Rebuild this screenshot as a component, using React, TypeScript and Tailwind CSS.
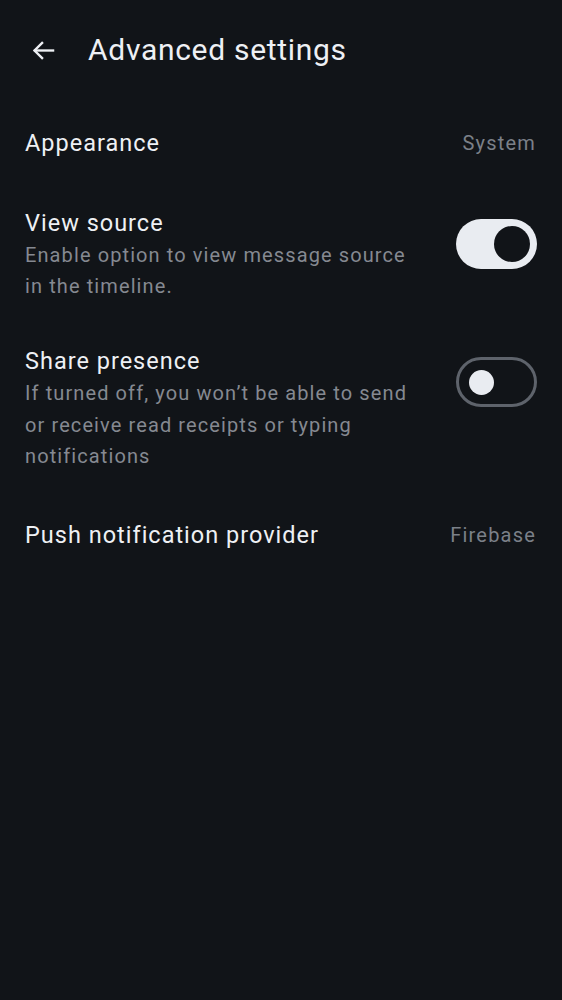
import React from "react";

function Toggle({ on }: { on: boolean }) {
  if (on) {
    return (
      <div className="-mr-[1px] mt-[12px] flex h-[50px] w-[81px] shrink-0 items-center justify-end rounded-full bg-[#e9ecf1] pr-[7px]">
        <div className="h-[36px] w-[36px] rounded-full bg-[#111418]" />
      </div>
    );
  }
  return (
    <div className="-mr-[1px] mt-[12px] flex h-[50px] w-[81px] shrink-0 items-center rounded-full border-[3px] border-[#5e636b] pl-[10px]">
      <div className="h-[25px] w-[25px] rounded-full bg-[#e9ecf1]" />
    </div>
  );
}

export default function App() {
  return (
    <div
      className="min-h-[1000px] w-full bg-[#111418] text-[#eef0f4]"
      style={{ fontFamily: "Roboto, 'Noto Sans', sans-serif" }}
    >
      <div className="flex h-[100px] items-center pl-[30px]">
        <svg width="27" height="27" viewBox="0 0 24 24" fill="none" stroke="#eef0f4" strokeWidth="2.1" strokeLinecap="square">
          <path d="M20.5 12H4.5" />
          <path d="M11.5 4.5L4 12l7.5 7.5" strokeLinecap="butt" strokeLinejoin="miter" />
        </svg>
        <div className="ml-[31px] text-[30px] font-normal leading-none tracking-[0.7px]">Advanced settings</div>
      </div>

      <div className="pl-[25px] pr-[26px]">
        <div className="mt-[27px] flex items-center justify-between">
          <div className="text-[23.5px] leading-[33px] tracking-[1px]">Appearance</div>
          <div className="text-[20px] leading-[33px] tracking-[1.2px] text-[#7b8088]">System</div>
        </div>

        <div className="mt-[47px] flex items-start gap-[30px]">
          <div className="flex-1">
            <div className="text-[23.5px] leading-[33px] tracking-[1px]">View source</div>
            <div className="text-[20px] leading-[31px] tracking-[1.1px] text-[#858991]">
              Enable option to view message source in the timeline.
            </div>
          </div>
          <Toggle on={true} />
        </div>

        <div className="mt-[43px] flex items-start gap-[30px]">
          <div className="flex-1">
            <div className="text-[23.5px] leading-[33px] tracking-[1px]">Share presence</div>
            <div className="text-[20px] leading-[31.5px] tracking-[1.1px] text-[#858991]">
              If turned off, you won’t be able to send or receive read receipts or typing notifications
            </div>
          </div>
          <Toggle on={false} />
        </div>

        <div className="mt-[46px] flex items-center justify-between">
          <div className="text-[23.5px] leading-[33px] tracking-[1px]">Push notification provider</div>
          <div className="text-[20px] leading-[33px] tracking-[1.2px] text-[#7b8088]">Firebase</div>
        </div>
      </div>
    </div>
  );
}
